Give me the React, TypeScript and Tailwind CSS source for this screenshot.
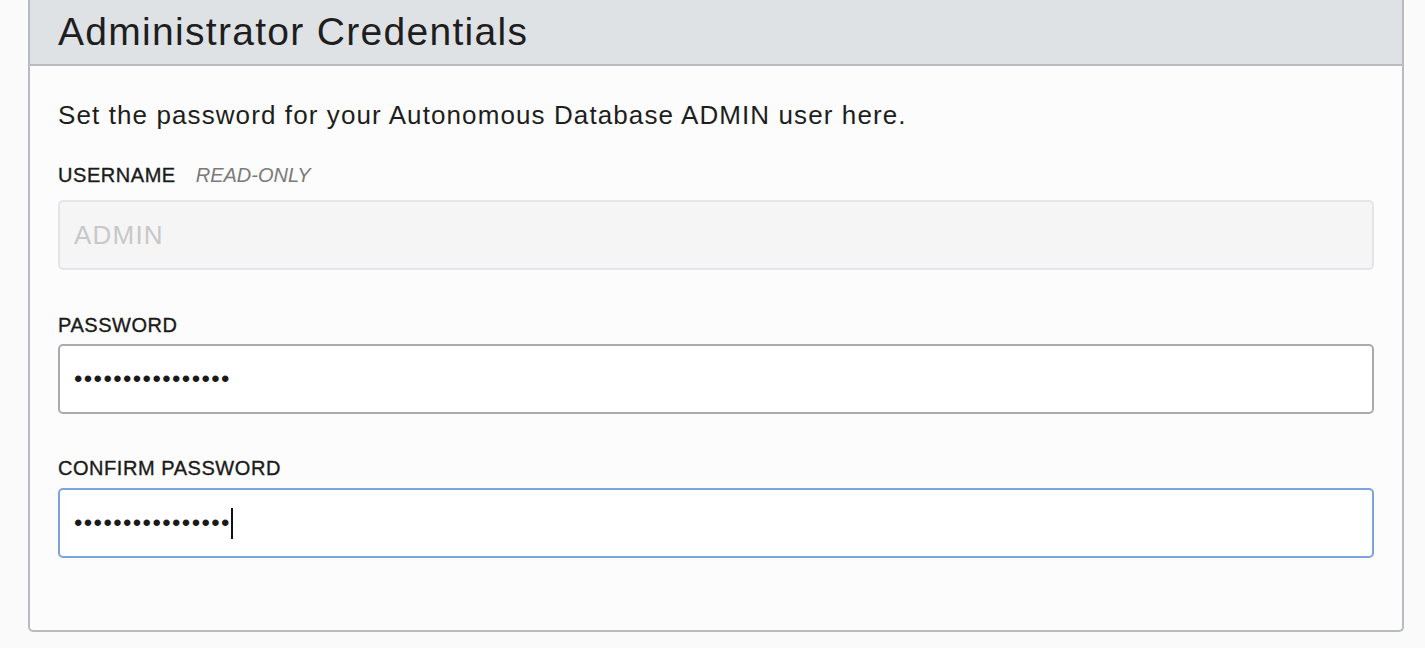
import React from 'react'

function Field({ label, extra, children, className }: { label: string; extra?: string; children: React.ReactNode; className?: string }) {
  return (
    <div className={className}>
      <div className="flex items-baseline gap-[20px] h-[24px] leading-[24px]">
        <span className="text-[20px] tracking-[0.55px] text-[#1a1a1a] [-webkit-text-stroke:0.35px_#1a1a1a]">{label}</span>
        {extra && <span className="text-[20px] italic tracking-[0px] text-[#7a7a7a]">{extra}</span>}
      </div>
      {children}
    </div>
  )
}

export default function App() {
  return (
    <div className="h-[648px] w-[1425px] bg-[#fafafa] pl-[28px] font-['Liberation_Sans',Arial,sans-serif] text-[#222]">
      <div className="w-[1376px] border-x-2 border-b-2 border-[#b8bcc1] rounded-b-[5px] bg-[#fcfcfc]">
        <div className="h-[66px] bg-[#dfe2e5] border-b-2 border-[#b8bcc1] pl-[28px] flex items-center">
          <h1 className="text-[39px] leading-none tracking-[1.3px] text-[#1e1e1e] pb-[2px]">Administrator Credentials</h1>
        </div>
        <div className="px-[28px] pt-[34px] pb-[72px]">
          <p className="text-[26px] leading-[30px] tracking-[1.1px] text-[#1e1e1e]">Set the password for your Autonomous Database ADMIN user here.</p>

          <Field label="USERNAME" extra="READ-ONLY" className="mt-[33px]">
            <div className="mt-[13px] h-[70px] rounded-[5px] border-2 border-[#e3e5e8] bg-[#f5f5f5] flex items-center px-[14px]">
              <span className="text-[26px] tracking-[1.2px] text-[#c8c8c8]">ADMIN</span>
            </div>
          </Field>

          <Field label="PASSWORD" className="mt-[43px]">
            <div className="mt-[7px] h-[70px] rounded-[5px] border-2 border-[#a9abae] bg-white flex items-center px-[14px]">
              <span className="text-[24px] tracking-[1.4px] text-[#1a1a1a]">••••••••••••••••</span>
            </div>
          </Field>

          <Field label="CONFIRM PASSWORD" className="mt-[42px]">
            <div className="mt-[8px] h-[70px] rounded-[5px] border-2 border-[#7ca4dc] bg-white flex items-center px-[14px]">
              <span className="text-[24px] tracking-[1.4px] text-[#1a1a1a]">••••••••••••••••</span>
              <span className="w-[2px] h-[31px] bg-[#111]" />
            </div>
          </Field>
        </div>
      </div>
    </div>
  )
}
